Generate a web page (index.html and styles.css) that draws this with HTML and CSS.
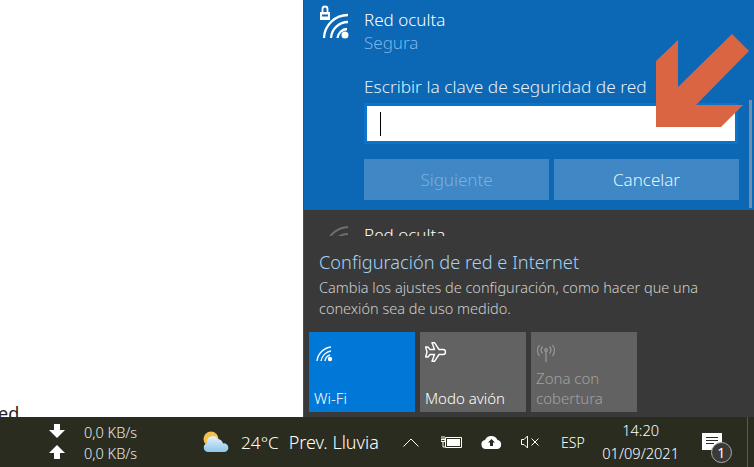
FILE: index.html
```html
<!DOCTYPE html>
<html lang="es">
<head>
    <meta charset="UTF-8">
    <title>Red oculta</title>
    <link rel="stylesheet" href="styles.css">
</head>
<body>
    <div class="desktop">
        <div class="page-behind"><span class="page-text">ed</span></div>

        <div class="flyout">
            <div class="network-list">
                <div class="network active">
                    <div class="network-head">
                        <svg class="wifi-lock" width="34" height="38" viewBox="0 0 34 38" fill="none" stroke="#fff" stroke-width="2.300">
                            <path d="M2 9h10v8H2z" fill="#fff" stroke="none"/>
                            <path d="M4 12.500h6" stroke="#0c67b5" stroke-width="2"/>
                            <path d="M4.500 9V6a2.500 2.500 0 0 1 5 0v3" stroke-width="1.800"/>
                            <path d="M6 35A24 24 0 0 1 30 12"/>
                            <path d="M13 35A17 17 0 0 1 30 19"/>
                            <path d="M19.500 35A10 10 0 0 1 29 26"/>
                            <circle cx="27" cy="32" r="3.500" fill="#fff" stroke="none"/>
                        </svg>
                        <div>
                            <div class="network-name">Red oculta</div>
                            <div class="network-status">Segura</div>
                        </div>
                    </div>
                    <label class="key-label">Escribir la clave de seguridad de red</label>
                    <div class="key-input"><span class="caret"></span></div>
                    <div class="key-buttons">
                        <button class="btn btn-disabled">Siguiente</button>
                        <button class="btn">Cancelar</button>
                    </div>
                </div>
                <div class="network other">
                    <svg class="wifi-dim" width="24" height="20" viewBox="0 0 24 20" fill="none" stroke="#6e6e6e" stroke-width="2">
                        <path d="M1 19a24 24 0 0 1 21-15"/>
                        <path d="M8 19a16 16 0 0 1 14-8"/>
                    </svg>
                    <div class="network-name">Red oculta</div>
                </div>
                <div class="scroll-thumb"></div>
            </div>

            <div class="settings">
                <a class="settings-link">Configuración de red e Internet</a>
                <p class="settings-desc">Cambia los ajustes de configuración, como hacer que una conexión sea de uso medido.</p>
            </div>

            <div class="tiles">
                <div class="tile tile-on">
                    <svg class="tile-icon-wifi" width="18" height="20" viewBox="0 0 18 20" fill="none" stroke="#fff" stroke-width="1.400">
                        <path d="M1 19A16 16 0 0 1 15 5"/>
                        <path d="M5 19A12 12 0 0 1 15 9"/>
                        <path d="M9 19A7 7 0 0 1 14 13"/>
                        <circle cx="14" cy="17" r="2.200" fill="#fff" stroke="none"/>
                    </svg>
                    <span class="tile-label">Wi-Fi</span>
                </div>
                <div class="tile">
                    <svg width="22" height="20" viewBox="0 0 22 20" fill="none" stroke="#fff" stroke-width="1.400" stroke-linejoin="round">
                        <path d="M7 .7h2.500L14 7.500h4a2.500 2.500 0 0 1 0 5h-4L9.500 19.300H7l2.500-6.800H5L3 15H.7L2 10 .7 5H3l2 2.500h4.500z"/>
                    </svg>
                    <span class="tile-label">Modo avión</span>
                </div>
                <div class="tile tile-off">
                    <svg width="20" height="20" viewBox="0 0 20 20" fill="none" stroke="#9b9b9b" stroke-width="1.200">
                        <path d="M10 9v11"/>
                        <circle cx="10" cy="8" r="1.300"/>
                        <path d="M6.500 4.500a5 5 0 0 0 0 7"/>
                        <path d="M13.500 4.500a5 5 0 0 1 0 7"/>
                        <path d="M3.500 3a9 9 0 0 0 0 11"/>
                        <path d="M16.500 3a9 9 0 0 1 0 11"/>
                    </svg>
                    <span class="tile-label">Zona con<br>cobertura</span>
                </div>
            </div>
        </div>

        <svg class="arrow" width="100" height="100" viewBox="0 0 100 100">
            <path d="M7 92V26L29 5V52L83 -1L100 16L47 70H94L72 92Z" fill="#d96543"/>
        </svg>
    </div>

    <div class="taskbar">
        <div class="speed">
            <div class="speed-row">
                <svg width="16" height="16" viewBox="0 0 16 16" fill="#fff"><path d="M5 0h6v6h5l-8 8-8-8h5z"/></svg>
                <span>0,0 KB/s</span>
            </div>
            <div class="speed-row">
                <svg width="16" height="16" viewBox="0 0 16 16" fill="#fff"><path d="M8 0l8 8h-5v6H5V8H0z"/></svg>
                <span>0,0 KB/s</span>
            </div>
        </div>

        <div class="weather">
            <svg width="28" height="22" viewBox="0 0 28 22">
                <defs>
                    <linearGradient id="cloud" x1="0" y1="0" x2="0" y2="1">
                        <stop offset="0" stop-color="#e4f2fb"/>
                        <stop offset="1" stop-color="#8cc6ea"/>
                    </linearGradient>
                </defs>
                <circle cx="9" cy="8" r="7.500" fill="#f1c14b"/>
                <path d="M6 21a4.500 4.500 0 0 1-1-8.800A6 6 0 0 1 16 8a6 6 0 0 1 5 4.500A4.300 4.300 0 0 1 23 21z" fill="url(#cloud)"/>
            </svg>
            <span class="temp">24°C</span>
            <span class="forecast">Prev. Lluvia</span>
        </div>

        <div class="tray">
            <svg class="tray-chevron" width="16" height="9" viewBox="0 0 16 9" fill="none" stroke="#fff" stroke-width="1"><path d="M0.500 8.500L8 1l7.500 7.500"/></svg>
            <svg class="tray-battery" width="21" height="12" viewBox="0 0 21 12" fill="none" stroke="#fff">
                <path d="M4.500 1.500h16v10h-16z"/>
                <path d="M6 3h13v7H6z" fill="#fff" stroke="none"/>
                <path d="M1 0v3M3 0v3M0 3.500h4v2H0zM2 5.500v5.500h2" stroke-width="1"/>
            </svg>
            <svg class="tray-cloud" width="21" height="14" viewBox="0 0 21 14">
                <path d="M5 14a4.500 4.500 0 0 1-1-8.900A6.800 6.800 0 0 1 16.500 5 4.600 4.600 0 0 1 16.500 14z" fill="#fff"/>
                <path d="M10.500 4L14 7.500h-2V11H9V7.500H7z" fill="#2b2c20"/>
            </svg>
            <svg class="tray-sound" width="19" height="14" viewBox="0 0 19 14" fill="none" stroke="#fff" stroke-width="1">
                <path d="M0.500 4.500H3L6.500 1v12L3 9.500H0.500z"/>
                <path d="M10.500 3.500l7 7M17.500 3.500l-7 7"/>
            </svg>
            <span class="lang">ESP</span>
            <div class="clock">
                <span>14:20</span>
                <span>01/09/2021</span>
            </div>
            <div class="notify">
                <svg width="22" height="18" viewBox="0 0 22 18">
                    <path d="M0 0h20v17H0z" fill="#fff"/>
                    <path d="M4 4.500h12M4 7.500h12M4 10.500h8" stroke="#2b2c20" stroke-width="1"/>
                </svg>
                <span class="notify-badge">1</span>
            </div>
            <div class="show-desktop"></div>
        </div>
    </div>
</body>
</html>
```

FILE: styles.css
```css
/* Windows 10 network flyout over taskbar */
body {
    margin: 0;
    width: 754px;
    height: 467px;
    overflow: hidden;
    display: flex;
    flex-direction: column;
    font-family: "Noto Sans", "Open Sans", sans-serif;
    font-weight: 300;
    background-color: #fff;
    color: #fff;
}
.desktop {
    position: relative;
    flex: 1;
    display: flex;
    min-height: 0;
    overflow: hidden;
}
.page-behind {
    flex: 1;
    position: relative;
    background-color: #fff;
}
.page-text {
    position: absolute;
    left: -2px;
    bottom: -8px;
    color: #222;
    font-size: 18px;
    font-weight: 400;
}
.flyout {
    width: 450px;
    display: flex;
    flex-direction: column;
    background-color: #393939;
    border-left: 1px solid #3d4f60;
}
.network-list {
    position: relative;
    height: 236px;
    overflow: hidden;
    flex-shrink: 0;
}
.network.active {
    height: 210px;
    box-sizing: border-box;
    background-color: #0c67b5;
    padding-left: 60px;
    position: relative;
}
.network-head {
    display: flex;
    padding-top: 8px;
}
.wifi-lock {
    position: absolute;
    left: 14px;
    top: 3px;
}
.network-name {
    font-size: 17px;
    line-height: 23px;
}
.network-status {
    font-size: 17px;
    line-height: 24px;
    color: #7fb5e6;
}
.key-label {
    display: block;
    margin-top: 21px;
    font-size: 17.300px;
    line-height: 22px;
    color: #e2f1fb;
}
.key-input {
    box-sizing: border-box;
    width: 374px;
    height: 41px;
    margin-top: 5px;
    background-color: #fff;
    border: 3px solid #0a74cb;
    display: flex;
    align-items: center;
    padding-left: 13px;
}
.caret {
    width: 1px;
    height: 24px;
    background-color: #000;
}
.key-buttons {
    display: flex;
    gap: 5px;
    margin-top: 15px;
}
.btn {
    width: 185px;
    height: 41px;
    padding: 0;
    border: none;
    font-family: inherit;
    font-weight: 300;
    font-size: 17px;
    color: #e8f3fb;
    background-color: #3f87c5;
}
.btn-disabled {
    color: #7fb0dc;
}
.network.other {
    position: relative;
    padding: 13px 0 0 60px;
    height: 30px;
    box-sizing: border-box;
    background-color: #393939;
}
.wifi-dim {
    position: absolute;
    left: 22px;
    top: 13px;
}
.scroll-thumb {
    position: absolute;
    right: 2px;
    top: 100px;
    width: 3px;
    height: 108px;
    background-color: #6f8fae;
}
.settings {
    padding: 14px 15px 0;
    height: 96px;
    box-sizing: border-box;
    flex-shrink: 0;
}
.settings-link {
    display: block;
    font-size: 18.200px;
    line-height: 24px;
    color: #a3d2f5;
}
.settings-desc {
    margin: 3px 0 0;
    width: 420px;
    font-size: 14.500px;
    line-height: 21px;
    color: #cfcfcf;
}
.tiles {
    display: flex;
    gap: 5px;
    padding-left: 5px;
}
.tile {
    box-sizing: border-box;
    width: 106px;
    height: 80px;
    padding: 10px 5px 4px;
    display: flex;
    flex-direction: column;
    justify-content: space-between;
    background-color: #626262;
    font-size: 15px;
}
.tile-on {
    background-color: #0078d7;
}
.tile-icon-wifi {
    margin-left: 2px;
}
.tile-label {
    line-height: 20px;
}
.tile-off {
    color: #a1a1a1;
}
.arrow {
    position: absolute;
    left: 649px;
    top: 35px;
    overflow: visible;
}
.taskbar {
    height: 50px;
    flex-shrink: 0;
    display: flex;
    align-items: center;
    background-color: #2b2c20;
}
.speed {
    margin-left: 49px;
    width: 152px;
    flex-shrink: 0;
    display: flex;
    flex-direction: column;
    gap: 1px;
}
.speed-row {
    display: flex;
    align-items: center;
    gap: 19px;
    height: 20px;
    font-size: 14.500px;
    color: #e8e8e8;
}
.weather {
    display: flex;
    align-items: center;
    width: 199px;
    flex-shrink: 0;
    font-size: 17.200px;
}
.weather svg {
    margin-left: 1px;
}
.temp {
    margin-left: 11px;
}
.forecast {
    margin-left: 10px;
    font-size: 18px;
}
.tray {
    flex: 1;
    height: 100%;
    position: relative;
    display: flex;
    align-items: center;
}
.tray-chevron {
    margin-left: 3px;
}
.tray-battery {
    margin-left: 22px;
}
.tray-cloud {
    margin-left: 19px;
}
.tray-sound {
    margin-left: 19px;
}
.lang {
    margin-left: 21px;
    font-size: 14px;
}
.clock {
    width: 90px;
    margin-left: 11px;
    padding-bottom: 2px;
    display: flex;
    flex-direction: column;
    align-items: center;
    gap: 5px;
    font-size: 14.600px;
    line-height: 18px;
}
.notify {
    position: relative;
    margin-left: 16px;
    width: 22px;
    height: 18px;
}
.notify-badge {
    position: absolute;
    left: 9px;
    top: 9px;
    box-sizing: border-box;
    width: 21px;
    height: 21px;
    border-radius: 50%;
    border: 1px solid #aaa;
    background-color: #3a3a36;
    font-size: 14px;
    font-weight: 400;
    line-height: 19px;
    text-align: center;
}
.show-desktop {
    position: absolute;
    right: 6px;
    top: 0;
    bottom: 0;
    width: 1px;
    background-color: #5a5b50;
}
```
